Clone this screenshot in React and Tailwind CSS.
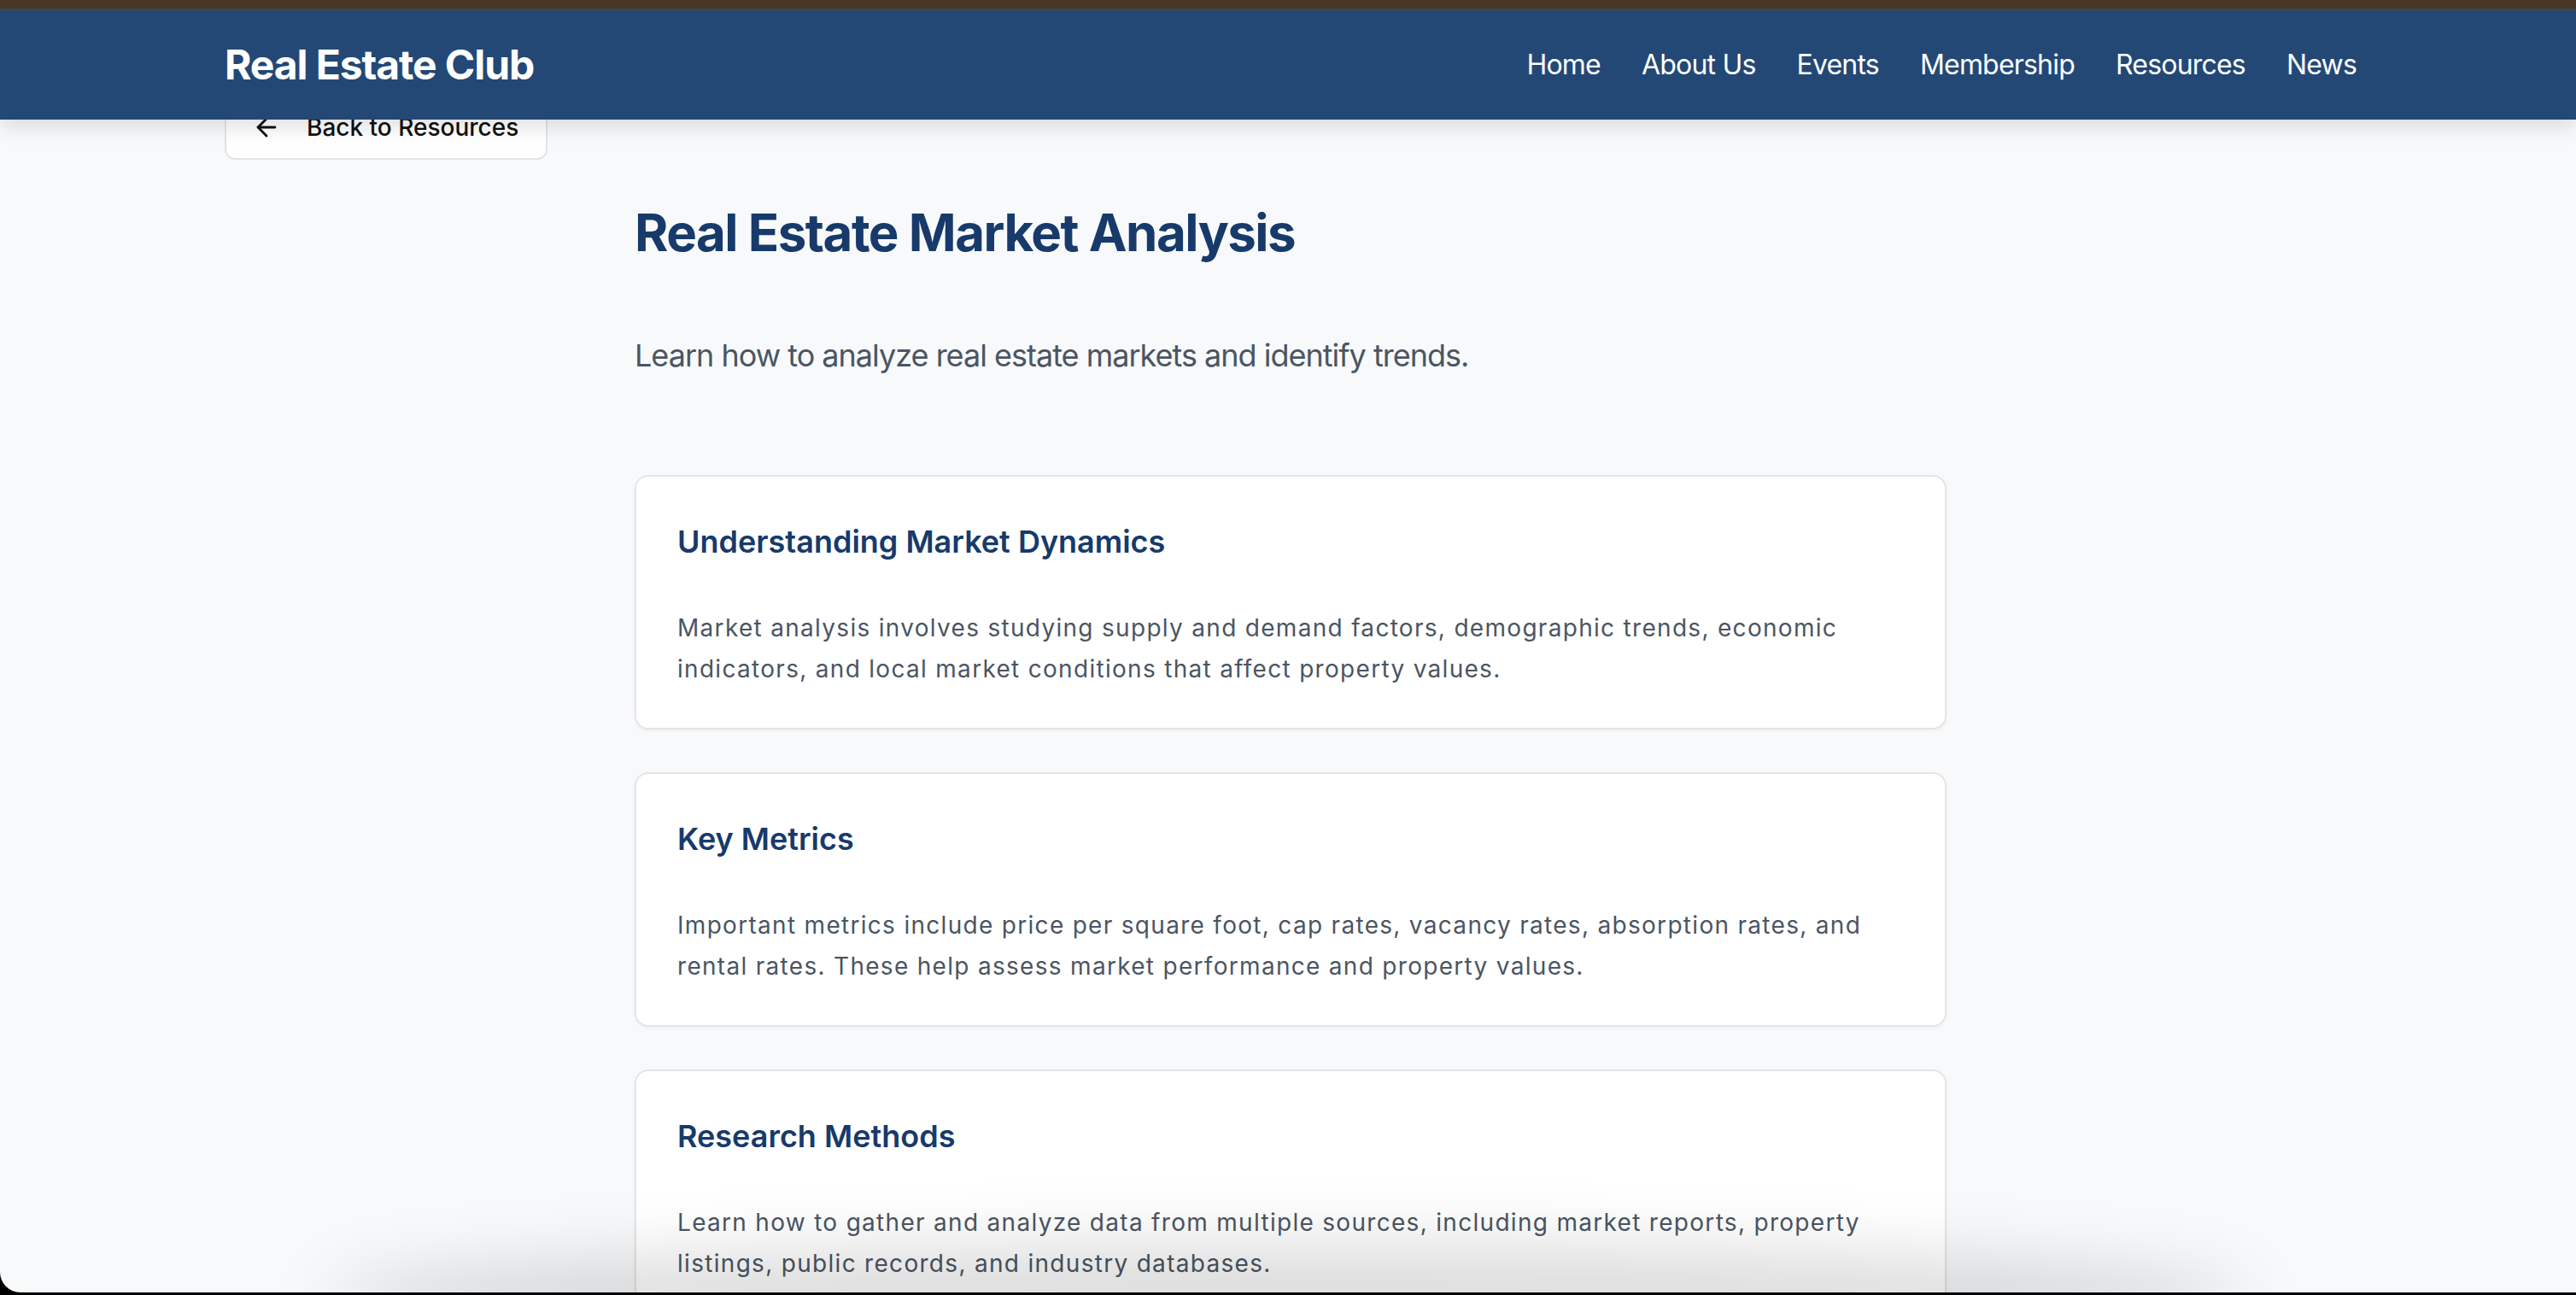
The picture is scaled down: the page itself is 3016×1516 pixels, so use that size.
import { ArrowLeft } from 'lucide-react';

const secciones = [
  {
    titulo: 'Understanding Market Dynamics',
    texto: 'Market analysis involves studying supply and demand factors, demographic trends, economic indicators, and local market conditions that affect property values.',
  },
  {
    titulo: 'Key Metrics',
    texto: 'Important metrics include price per square foot, cap rates, vacancy rates, absorption rates, and rental rates. These help assess market performance and property values.',
  },
  {
    titulo: 'Research Methods',
    texto: 'Learn how to gather and analyze data from multiple sources, including market reports, property listings, public records, and industry databases.',
  },
];

const links = ['Home', 'About Us', 'Events', 'Membership', 'Resources', 'News'];

function App() {
  return (
    <div className="h-[1516px] overflow-hidden bg-black font-['Inter',sans-serif]">
      <div className="relative h-[1513px] overflow-hidden rounded-bl-[24px] bg-[#f8f9fb]">
        <div className="h-[10px] bg-[#4a3826]" />
        <div className="h-[2px] bg-[#4b4641]" />

        {/* Header */}
        <header className="relative z-10 h-[128px] bg-[#234876] shadow-[0_8px_24px_rgba(0,0,0,0.13)]">
          <div className="h-full pl-[6px]">
            <div className="mx-auto flex h-full max-w-[2560px] items-center justify-between px-[32px]">
              <span className="text-[48px] font-bold leading-[64px] tracking-[-1.1px] text-white">Real Estate Club</span>
              <nav className="flex items-center gap-[48px]">
                {links.map(l => (
                  <a key={l} className="text-[32px] leading-[48px] tracking-[-0.8px] text-white">{l}</a>
                ))}
              </nav>
            </div>
          </div>
        </header>

        {/* Contenido */}
        <main className="-mt-[29px] pl-[6px]">
          <div className="mx-auto max-w-[2560px] px-[32px]">
            <button className="inline-flex items-center rounded-[12px] border-2 border-[#e4e4e7] bg-white py-[16px] pl-[30px] pr-[32px] text-[28px] font-medium leading-[40px] text-[#111111]">
              <ArrowLeft className="mr-[30px] h-[34px] w-[34px]" strokeWidth={2} />
              Back to Resources
            </button>
          </div>

          <div className="mx-auto mt-[49px] max-w-[1536px]">
            <h1 className="text-[60px] font-bold leading-[72px] tracking-[-1.5px] text-[#173a6b]">Real Estate Market Analysis</h1>
            <p className="mt-[80px] text-[36px] leading-[56px] tracking-[-1px] text-[#4b5563]">
              Learn how to analyze real estate markets and identify trends.
            </p>

            <div className="mt-[112px] flex flex-col gap-[50px]">
              {secciones.map(s => (
                <div key={s.titulo} className="rounded-[16px] border-2 border-[#e5e5e5] bg-white px-[48px] pb-[45px] pt-[48px] shadow-[0_2px_4px_rgba(0,0,0,0.04)]">
                  <h2 className="text-[36px] font-semibold leading-[56px] text-[#173a6b]">{s.titulo}</h2>
                  <p className="mt-[49px] text-[28px] leading-[48px] tracking-[1.3px] text-[#4b5563]">{s.texto}</p>
                </div>
              ))}
            </div>
          </div>
        </main>

        {/* sombra inferior */}
        <div className="pointer-events-none absolute bottom-[-70px] left-[380px] right-[380px] z-20 h-[130px] rounded-[50%] bg-black/[0.13] blur-[36px]" />
      </div>
    </div>
  );
}

export default App;
